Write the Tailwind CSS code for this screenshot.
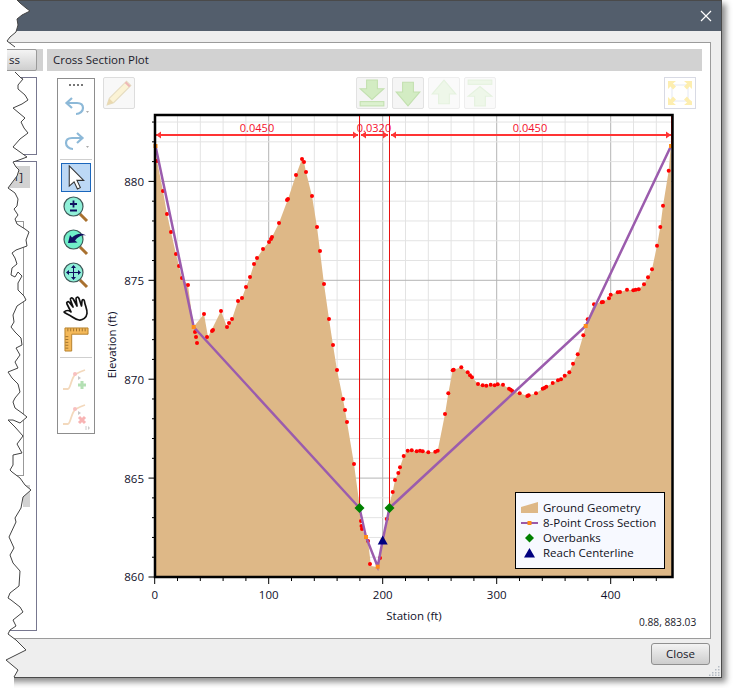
<!DOCTYPE html>
<html lang="en">
<head>
<meta charset="UTF-8">
<title>Cross Section Plot</title>
<script src="https://cdn.jsdelivr.net/npm/@tailwindcss/browser@4"></script>
</head>
<body class="bg-white">
<div class="relative w-[733px] h-[688px] overflow-hidden bg-white font-['Open_Sans',sans-serif] text-[11.5px] text-[#1a1a2a]">

  <!-- window -->
  <div class="w-[722px] h-[678px] flex flex-col bg-[#eeeeee] border-t border-r border-b border-[#4a4a4a] shadow-[4px_4px_6px_rgba(0,0,0,0.45)]">
    <div class="h-[30px] shrink-0 bg-[#535e6c] flex items-center justify-end pr-[9px]">
      <svg width="12" height="12" viewBox="0 0 12 12" fill="none" stroke="#fff" stroke-width="1.2"><path d="M1 1l10 10M11 1L1 11"/></svg>
    </div>

    <div class="mt-[11px] h-[597px] w-[711px] shrink-0 bg-white border-t border-b border-r border-[#9b9b9b] flex pt-[6px]">
      <!-- left column, mostly torn off -->
      <div class="w-[43px] shrink-0">
        <div class="h-[22px] bg-[#d2d2d2]">
          <div class="w-[37px] h-[22px] rounded-[2px] border border-[#9a9a9a] bg-gradient-to-b from-[#f4f4f4] to-[#cfcfcf] text-right pr-[16px] leading-[20px]">ss</div>
        </div>
        <div class="mt-[6px] w-[37px] h-[78px] border-y border-r border-[#77778f]"></div>
        <div class="relative mt-[6px] w-[37px] h-[470px] border-y border-r border-[#77778f]">
          <div class="mt-[4px] ml-[9px] w-[21px] h-[22px] bg-[#d2d2d2] text-right pr-[7px] leading-[22px]">1]</div>
          <div class="mt-[33px] w-[24px] h-[255px] border-t border-r border-b border-[#999]"></div>
          <div class="ml-[23px] mt-[9px] w-[7px] h-[22px] bg-[#d2d2d2]"></div>
        </div>
      </div>

      <div class="ml-[4px] w-[655px] shrink-0">
        <div class="h-[22px] bg-[#d2d2d2] pl-[6px] leading-[22px] font-medium">Cross Section Plot</div>

        <div class="flex mt-[6px] pl-[10px]">
          <!-- tool strip -->
          <div class="w-[38px] h-[356px] mt-[1px] shrink-0 border border-[#8d8d8d] flex flex-col items-center relative">
            <div class="flex gap-[2px] mt-[5px] h-[2px]">
              <i class="w-[2px] h-[2px] bg-[#777]"></i><i class="w-[2px] h-[2px] bg-[#777]"></i><i class="w-[2px] h-[2px] bg-[#777]"></i><i class="w-[2px] h-[2px] bg-[#777]"></i>
            </div>
            <div class="mt-[3px] h-[33px] flex items-center">
              <svg width="30" height="24" viewBox="0 0 30 24" fill="none"><path d="M6 9h10c5 0 6 3 6 5 0 3-3 6-7 6" stroke="#8db9d8" stroke-width="2.2"/><path d="M11 4L5.500 9l5.500 5" stroke="#8db9d8" stroke-width="2.2"/><path d="M25 17l3 0-1.500 2z" fill="#aaa"/></svg>
            </div>
            <div class="mt-[2px] h-[33px] flex items-center">
              <svg width="30" height="24" viewBox="0 0 30 24" fill="none"><path d="M21 9H11c-5 0-6 3-6 5 0 3 3 6 7 6" stroke="#8db9d8" stroke-width="2.2"/><path d="M16 4l5.500 5-5.500 5" stroke="#8db9d8" stroke-width="2.2"/><path d="M25 17l3 0-1.500 2z" fill="#aaa"/></svg>
            </div>
            <div class="mt-[2px] w-[32px] h-px bg-[#cfcfcf]"></div>
            <!-- pointer -->
            <div class="mt-[3px] w-[30px] h-[29px] bg-[#bcd8f5] border border-[#1a66bc] flex items-center justify-center">
              <svg width="24" height="27" viewBox="0 0 24 28"><path d="M5 2l15 15-7 0 3.500 7.500-3 1.500-3.500-7.500-5 4.500z" fill="#fff" stroke="#333" stroke-width="1.100"/></svg>
            </div>
            <!-- zoom +/- -->
            <div class="h-[33px] flex items-center">
              <svg width="28" height="28" viewBox="0 0 28 28"><path d="M18 19l7 7" stroke="#a9712f" stroke-width="3"/><circle cx="11.500" cy="11.500" r="9.500" fill="#8ff0d8" stroke="#3e5a5a" stroke-width="1.200"/><path d="M8 9h7M11.500 5.500v7M8 15.500h7" stroke="#101060" stroke-width="1.800" fill="none"/></svg>
            </div>
            <!-- zoom previous -->
            <div class="h-[33px] flex items-center">
              <svg width="28" height="28" viewBox="0 0 28 28"><path d="M18 19l7 7" stroke="#a9712f" stroke-width="3"/><circle cx="11.500" cy="11.500" r="9.500" fill="#70efc9" stroke="#3e5a5a" stroke-width="1.200"/><path d="M6 15l2-8 2 2.500c4-4 10-5 14-2-4-1-8 1-11 5l2.500 2z" fill="#101060"/></svg>
            </div>
            <!-- zoom extents -->
            <div class="h-[33px] flex items-center">
              <svg width="28" height="28" viewBox="0 0 28 28"><path d="M18 19l7 7" stroke="#a9712f" stroke-width="3"/><circle cx="11.500" cy="11.500" r="9.500" fill="#8ff0d8" stroke="#3e5a5a" stroke-width="1.200"/><path d="M11.500 4l2.500 3h-5zM11.500 19l2.500-3h-5zM4 11.500l3-2.500v5zM19 11.500l-3-2.500v5z" fill="#101060"/><path d="M11.500 6v11M6 11.500h11" stroke="#101060" stroke-width="1"/></svg>
            </div>
            <!-- hand -->
            <div class="mt-[1px] h-[34px] flex items-center">
              <svg width="28" height="28" viewBox="0 0 28 28"><path d="M2 17c2-2 5-2 7 0L5 9c-1-2 1-3 2.500-1.500L11 12 8.500 5c-.5-2 1.500-3 2.800-1L15 11 14 4c0-2 2-2.500 3-.5L19.500 11l.5-5c.5-2 2.500-1.500 2.500.5 .5 4 3 8 2.500 12-.5 4-4 7-8 6.500-4-.5-6-3-9-4.500-2-1-4-2-5.500-3z" fill="#fff" stroke="#111" stroke-width="1.700" stroke-linejoin="round"/></svg>
            </div>
            <!-- ruler -->
            <div class="h-[26px] flex items-center">
              <svg width="25" height="25" viewBox="0 0 26 26"><path d="M1 1h24v6.500H8V25H1z" fill="#f4b95a" stroke="#b5802a" stroke-width="1"/><path d="M4 1.500v3M7 1.500v3M10 1.500v3M13 1.500v3M16 1.500v3M19 1.500v3M22 1.500v3M1.500 10h3M1.500 13h3M1.500 16h3M1.500 19h3M1.500 22h3" stroke="#8a6020" stroke-width=".8"/></svg>
            </div>
            <div class="mt-[5px] w-[32px] h-px bg-[#cfcfcf]"></div>
            <!-- add point, faded -->
            <div class="mt-[4px] h-[32px] flex items-center">
              <svg width="28" height="28" viewBox="0 0 28 28" fill="none"><path d="M1 25h5c3-1 3-12 8-15 3-2 6-3 9-4" stroke="#f3d9bd" stroke-width="1.800"/><circle cx="13" cy="10" r="2" fill="#f8c0c0"/><path d="M16 12l3 2-3 2z" fill="#c8c8c8"/><path d="M20 17v8M16 21h8" stroke="#b4e0b4" stroke-width="3"/></svg>
            </div>
            <!-- remove point, faded -->
            <div class="mt-[3px] h-[32px] flex items-center">
              <svg width="28" height="28" viewBox="0 0 28 28" fill="none"><path d="M1 25h5c3-1 3-12 8-15 3-2 6-3 9-4" stroke="#f3d9bd" stroke-width="1.800"/><circle cx="13" cy="10" r="2" fill="#f8c0c0"/><path d="M16 12l3 2-3 2z" fill="#c8c8c8"/><path d="M17 18l6 6M23 18l-6 6" stroke="#f8b4b4" stroke-width="3"/></svg>
            </div>
            <svg class="absolute right-[3px] bottom-[2px]" width="6" height="6" viewBox="0 0 6 6" fill="none"><path d="M1 1v4" stroke="#ccc"/><path d="M3 1l2 2-2 2z" fill="#ccc"/></svg>
          </div>

          <div class="ml-[8px] w-[599px] shrink-0">
            <!-- button row -->
            <div class="flex h-[32px]">
              <div class="w-8 h-8 rounded-[2px] border border-[#dddddd] bg-[#f8f8f8] flex items-center justify-center">
                <svg width="28" height="28" viewBox="0 0 26 26" fill="none"><path d="M2 24l2-6L20 2l4 4L8 22z" fill="#fbf3d5" stroke="#e5dcc0"/><path d="M19 3l4 4" stroke="#eeb8b8" stroke-width="2"/><path d="M2 24l2-6 4 4z" fill="#ead9b0"/></svg>
              </div>
              <div class="ml-[221px] flex gap-[4px]">
                <div class="w-8 h-8 rounded-[2px] border border-[#e2e2e2] bg-[#f5f5f5] flex items-center justify-center">
                  <svg width="28" height="28" viewBox="0 0 26 26"><path d="M8 1h10v8h6L13 19 2 9h6z" fill="#d3ecc3" stroke="#c3e0b0"/><rect x="2" y="21" width="22" height="4" fill="#dcf1cf" stroke="#c3e0b0"/></svg>
                </div>
                <div class="w-8 h-8 rounded-[2px] border border-[#e2e2e2] bg-[#f5f5f5] flex items-center justify-center">
                  <svg width="28" height="28" viewBox="0 0 26 26"><path d="M8 3h10v9h6L13 25 2 12h6z" fill="#d3ecc3" stroke="#c3e0b0"/></svg>
                </div>
                <div class="w-8 h-8 rounded-[2px] border border-[#eeeeee] bg-[#fafafa] flex items-center justify-center">
                  <svg width="28" height="28" viewBox="0 0 26 26"><path d="M8 23h10v-9h6L13 1 2 14h6z" fill="#eef7e9" stroke="#e5f2df"/></svg>
                </div>
                <div class="w-8 h-8 rounded-[2px] border border-[#eeeeee] bg-[#fafafa] flex items-center justify-center">
                  <svg width="28" height="28" viewBox="0 0 26 26"><rect x="2" y="1" width="22" height="4" fill="#eef7e9" stroke="#e5f2df"/><path d="M8 25h10v-9h6L13 7 2 16h6z" fill="#eef7e9" stroke="#e5f2df"/></svg>
                </div>
              </div>
              <div class="ml-auto mr-[6px] w-8 h-8 border border-[#d8dae4] flex items-center justify-center">
                <svg width="26" height="26" viewBox="0 0 26 26"><rect x="5" y="5" width="16" height="16" fill="none" stroke="#e4e8f4"/><path d="M1 1h8l-3 2.500 3 3-3 3-2.500-3L1 9zM25 1h-8l3 2.500-3 3 3 3 2.500-3L25 9zM1 25h8l-3-2.500 3-3-3-3-2.500 3L1 17zM25 25h-8l3-2.500-3-3 3-3 2.500 3 2.500 2z" fill="#fdeeb0"/></svg>
              </div>
            </div>

            <!-- chart: svg coordinates are the page's own pixels -->
            <div class="relative mt-[1px] h-[525px]">
              <svg id="plot" width="599" height="525" viewBox="103 110 599 525" class="block"></svg>
              <div class="absolute left-[412px] top-[382px] w-[150px] h-[77px] bg-[#f7f9ff] border border-black pt-[7px] pl-[5px] text-[11.5px] leading-[15px] text-[#111122]">
                <div class="flex items-center h-[15px]">
                  <svg width="17" height="12" viewBox="0 0 17 12" class="mr-[5px]"><path d="M0 11V5l17-5v11z" fill="#deb887"/></svg>Ground Geometry
                </div>
                <div class="flex items-center h-[15px]">
                  <svg width="17" height="12" viewBox="0 0 17 12" class="mr-[5px]"><path d="M0 6h17" stroke="#9b59a8" stroke-width="2"/><rect x="6.500" y="4" width="4" height="4" fill="#ff8c1a"/></svg>8-Point Cross Section
                </div>
                <div class="flex items-center h-[15px]">
                  <svg width="17" height="12" viewBox="0 0 17 12" class="mr-[5px]"><path d="M8.500 1.500l4.500 4.500-4.500 4.500L4 6z" fill="#008000"/></svg>Overbanks
                </div>
                <div class="flex items-center h-[15px]">
                  <svg width="17" height="12" viewBox="0 0 17 12" class="mr-[5px]"><path d="M8.500 1l5.500 9.500H3z" fill="#000080"/></svg>Reach Centerline
                </div>
              </div>
            </div>
          </div>
        </div>
      </div>
    </div>

    <!-- footer -->
    <div class="relative flex-1 flex justify-end items-start pt-[4px] pr-[11px]">
      <button class="w-[59px] h-[22px] rounded-[3px] border border-[#8f8f8f] bg-gradient-to-b from-[#f3f3f3] to-[#cdcdcd] text-[11.5px] leading-[18px]">Close</button>
      <svg class="absolute right-[1px] bottom-[1px]" width="11" height="11" viewBox="0 0 11 11" fill="#b5bcc4"><rect x="9" y="1" width="1.500" height="1.500"/><rect x="6" y="4" width="1.500" height="1.500"/><rect x="9" y="4" width="1.500" height="1.500"/><rect x="3" y="7" width="1.500" height="1.500"/><rect x="6" y="7" width="1.500" height="1.500"/><rect x="9" y="7" width="1.500" height="1.500"/><rect x="0" y="9.500" width="1.500" height="1.500"/><rect x="3" y="9.500" width="1.500" height="1.500"/><rect x="6" y="9.500" width="1.500" height="1.500"/><rect x="9" y="9.500" width="1.500" height="1.500"/></svg>
    </div>
  </div>

  <div class="absolute left-[639px] top-[615px] text-[10.2px] leading-[14px]">0.88, 883.03</div>

  <!-- torn left edge -->
  <svg class="absolute left-0 top-0" width="40" height="688" viewBox="0 0 40 688">
    <path id="tear-fill" fill="#fff"></path>
    <path id="tear-line" fill="none" stroke="#444" stroke-width="1"></path>
  </svg>
</div>

<script>
// tear line, top to bottom. the line stops where it crosses the "ss" button
const tearTop = [[17,0],[20,3],[26,8],[30,11],[22,15],[17,19],[18,25],[16,32],[10,37],[7,41],[11,44],[15,47]];
const tearGap = [[7,49],[7,71]];
const tearRest = [[15,72],[21,78],[23,79],[18,85],[18,89],[25,95],[28,100],[22,104],[13,108],[19,113],[25,118],[21,122],[24,128],[28,133],[20,139],[13,147],[20,152],[27,157],[19,160],[13,162],[16,167],[19,170],[17,176],[8,188],[15,193],[18,199],[17,206],[14,209],[18,215],[15,219],[17,224],[25,229],[29,232],[26,240],[27,246],[16,250],[12,253],[15,258],[17,264],[12,268],[11,275],[15,277],[18,272],[22,276],[18,283],[18,290],[24,296],[26,300],[17,306],[13,315],[14,322],[11,327],[15,332],[21,338],[22,345],[16,348],[20,355],[15,362],[18,368],[8,372],[12,378],[18,384],[20,392],[15,398],[13,402],[15,408],[22,413],[27,417],[20,423],[13,420],[8,420],[15,427],[23,436],[17,444],[22,453],[13,455],[13,465],[10,470],[12,472],[20,478],[25,485],[31,490],[23,497],[21,508],[15,518],[16,522],[9,537],[14,548],[10,555],[13,563],[20,571],[19,586],[10,593],[8,598],[11,600],[20,607],[23,612],[13,620],[16,626],[10,630],[8,634],[16,640],[26,650],[14,656],[6,660],[12,665],[18,670],[14,677]];
const toPath = pts => pts.map((p, i) => (i ? "L" : "M") + p[0] + " " + p[1]).join("");
document.getElementById("tear-line").setAttribute("d", toPath(tearTop) + toPath(tearRest));
document.getElementById("tear-fill").setAttribute("d", "M0 0L" + tearTop.concat(tearGap, tearRest).map(p => p.join(" ")).join("L") + "L14 688L0 688Z");

// plot
const L = 155, T = 115, R = 672.5, B = 577;
const xAt = s => 154.7 + s * 1.14;
const yAt = e => 181.3 + (880 - e) * 19.78;

const ground = "155,143 157,161 163,191 167,214 171,232 176,254 179,266 182,278 188,285 193.5,327 204,314 208,337 221,311 227,327 229,323 232,319 238,301 242,298 246,287 250,277 254,264 257,258 263,249 269,242 271,239 272,237 279,223 288,199 296,175 302,159 304,162 306,172 312,196 317,227 320,251 324,284 329,319 333,345 337,370 343,399 345,410 347,422 354,464 359.5,505 360.5,521 362,529 368,541 371,566 377,567 380,558 386.7,519 389,505 392.7,492 395,480 398.3,473 400,467.3 403.7,456 407.7,450.7 411.7,450.3 416.7,451.3 420,450.7 422.7,451.3 428.3,452.3 435.3,451.7 437.7,450.7 445,414 448.3,393.3 452.7,370.3 453.7,369.7 461.3,367.3 467.7,372.3 470,375.3 472,377.3 478,384 482.7,385.3 486.3,385.7 490.7,384.7 494.7,385.3 497.7,384.3 503,384.7 509,388.7 510.7,389.7 512.3,391 519.7,393.3 527.3,396 528.7,395.3 536,393.3 542.7,388.7 544.3,388 546.3,386.7 552.7,383 558,380.3 561,379.3 564.7,375.7 569.3,372.3 573,363.7 577.7,354.3 583.3,335.3 587.7,319.3 594,304.3 601.7,302.3 603,302 609,298.3 610.7,294.7 617.7,292.3 620,292 627,289.7 633.3,290.3 635.7,289.7 638.7,289.3 644,284.3 648,277.3 652,269.3 657,245.7 660.3,227 663,205.7 668.7,170.7 671,143 672,577 155,577";

const dots = [[157,161],[163,191],[167,214],[171,232],[176,254],[179,266],[182,278],[188,285],[195,332],[196,337],[197,343],[204,314],[207,337],[212,331],[213,330],[221,311],[227,327],[229,323],[232,319],[238,301],[242,298],[246,287],[250,277],[254,264],[257,258],[263,249],[269,242],[271,239],[272,237],[279,223],[287,200],[288,199],[296,175],[302,159],[304,162],[306,172],[312,196],[317,227],[320,251],[324,284],[329,319],[333,345],[337,370],[343,399],[345,410],[347,422],[354,464],[361,521],[361.500,526],[362,529],[368,541],[370,564],[380,558],[386.700,519],[392.700,492],[395,480],[398.300,473],[400,467.300],[403.700,456],[407.700,450.700],[411.700,450.300],[416.700,451.300],[420,450.700],[422.700,451.300],[428.300,452.300],[435.300,451.700],[437.700,450.700],[445,414],[448.300,393.300],[452.700,370.300],[453.700,369.700],[461.300,367.300],[467.700,372.300],[470,375.300],[472,377.300],[478,384],[482.700,385.300],[486.300,385.700],[490.700,384.700],[494.700,385.300],[497.700,384.300],[503,384.700],[509,388.700],[510.700,389.700],[512.300,391],[519.700,393.300],[527.300,396],[528.700,395.300],[536,393.300],[542.700,388.700],[544.300,388],[546.300,386.700],[552.700,383],[558,380.300],[561,379.300],[564.700,375.700],[569.300,372.300],[573,363.700],[577.700,354.300],[583.300,335.300],[587.700,319.300],[594,304.300],[601.700,302.300],[603,302],[609,298.300],[610.700,294.700],[617.700,292.300],[620,292],[627,289.700],[633.300,290.300],[635.700,289.700],[638.700,289.300],[644,284.300],[648,277.300],[652,269.300],[657,245.700],[660.300,227],[663,205.700],[668.700,170.700]];

const section = [[155.500,146],[193.700,327],[359.500,508],[366,537],[377.700,566.700],[382.700,540],[389.500,508],[585.700,326],[671,146]];
const red = "#ff3434";
let h = "";

// grid
for (let k = 1; k < 23; k++) {
  const x = 154.7 + k * 22.8;
  if (x >= R) break;
  h += `<path d="M${x} ${T}V${B}" stroke="${k % 5 ? "#e3e3e3" : "#b4b4b4"}" stroke-width="1"/>`;
}
for (let k = 0; k < 24; k++) {
  const y = B - k * 19.78;
  if (y <= T) break;
  h += `<path d="M${L} ${y}H${R}" stroke="${k % 5 ? "#e3e3e3" : "#b4b4b4"}" stroke-width="1"/>`;
}

h += `<polygon points="${ground}" fill="#deb887"/>`;

// manning n bands
h += `<path d="M359.500 ${T}V505M389.500 ${T}V505M671.500 ${T}V146" stroke="#e81010" stroke-width="1"/>`;
h += `<path d="M156 135H358M361 135H388M391 135H671" stroke="${red}" stroke-width="2"/>`;
[[156,1],[361,1],[391,1],[358,-1],[388,-1],[671,-1]].forEach(a => {
  h += `<path d="M${a[0]} 135l${a[1] * 5} -3.500v7z" fill="${red}"/>`;
});
[[257,"0.0450"],[374,"0.0320"],[530,"0.0450"]].forEach(t => {
  h += `<text x="${t[0]}" y="131.500" text-anchor="middle" fill="#f5102c" font-size="11">${t[1]}</text>`;
});

dots.forEach(d => { h += `<circle cx="${d[0]}" cy="${d[1]}" r="2" fill="#ff0000"/>`; });

h += `<polyline points="${section.map(p => p.join(",")).join(" ")}" fill="none" stroke="#9b5cad" stroke-width="2.500"/>`;
section.forEach(p => { h += `<rect x="${p[0] - 2}" y="${p[1] - 2}" width="4" height="4" fill="#ff8c1a"/>`; });

// overbanks + centerline
[359.500, 389.500].forEach(x => { h += `<path d="M${x} 503l5 5-5 5-5-5z" fill="#008000"/>`; });
h += `<path d="M382.700 535.500l5 9h-10z" fill="#000080"/>`;

// frame and ticks
h += `<rect x="${L}" y="${T}" width="${R - L}" height="${B - T}" fill="none" stroke="#000" stroke-width="2.500"/>`;
for (let k = 0; k < 24; k++) {
  const y = B - k * 19.78;
  if (y < T) break;
  h += `<path d="M${k % 5 ? 152 : 148.500} ${y}H${L}" stroke="#000"/>`;
}
for (let k = 0; k < 23; k++) {
  const x = 154.7 + k * 22.8;
  if (x > R) break;
  h += `<path d="M${x} ${B}V${k % 5 ? 581 : 584}" stroke="#000"/>`;
}
[860,865,870,875,880].forEach(e => {
  h += `<text x="144" y="${yAt(e) + 4.500}" text-anchor="end" fill="#10102a" font-size="11.5">${e}</text>`;
});
[0,100,200,300,400].forEach(s => {
  h += `<text x="${xAt(s)}" y="598.500" text-anchor="middle" fill="#10102a" font-size="11.5">${s}</text>`;
});
h += `<text x="414" y="620" text-anchor="middle" fill="#10102a" font-size="11.5">Station (ft)</text>`;
h += `<text transform="translate(116 345) rotate(-90)" text-anchor="middle" fill="#10102a" font-size="11.5">Elevation (ft)</text>`;

document.getElementById("plot").innerHTML = h;
</script>
</body>
</html>
